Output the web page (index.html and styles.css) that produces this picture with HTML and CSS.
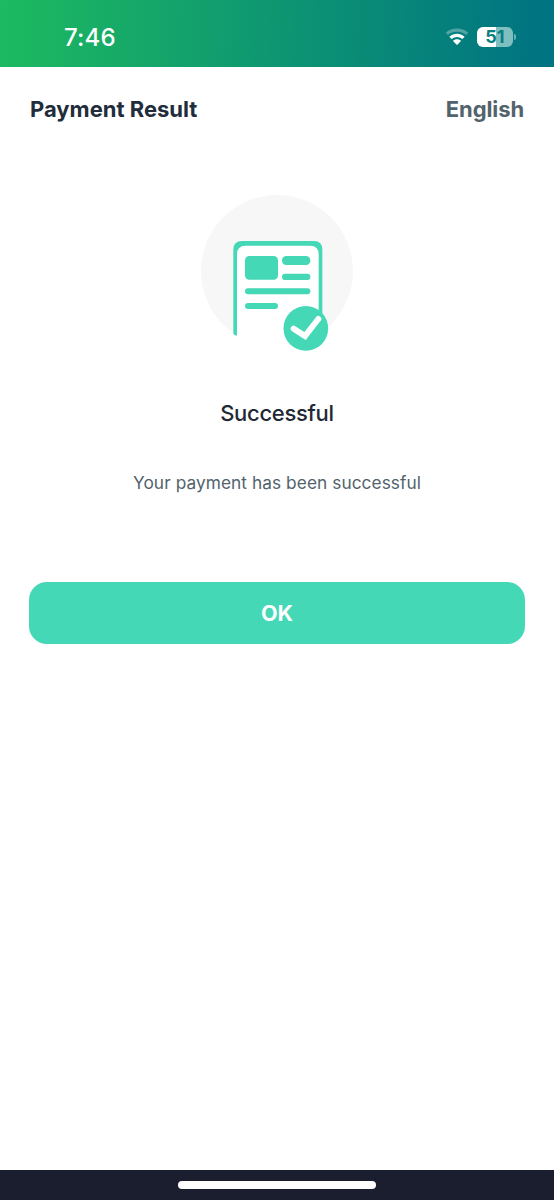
FILE: index.html
```html
<!DOCTYPE html>
<html lang="en">
<head>
<meta charset="utf-8">
<meta name="viewport" content="width=device-width, initial-scale=1">
<title>Payment Result</title>
<link rel="stylesheet" href="styles.css">
</head>
<body>
<div class="screen">
  <div class="status-bar">
    <span class="time">7:46</span>
    <div class="indicators">
      <svg class="wifi" viewBox="0 0 24 20" aria-hidden="true">
        <path class="wifi-faint" d="M0.7 5.7C7 .2 17 .2 23.3 5.7L21.1 7.900C16 3.600 8 3.600 2.9 7.900Z"/>
        <path d="M4.3 9.8C8.7 5.8 15.3 5.8 19.7 9.8L17.3 12.1C14.3 9.4 9.7 9.4 6.7 12.1Z"/>
        <path d="M7.8 13.7C10.2 11.6 13.8 11.6 16.2 13.7L12.6 17.4Q12 18 11.4 17.4Z"/>
      </svg>
      <div class="battery"><span class="level">51</span></div>
      <span class="battery-cap"></span>
    </div>
  </div>
  <header class="header">
    <h1 class="title">Payment Result</h1>
    <span class="language">English</span>
  </header>
  <main class="result">
    <svg class="illustration" viewBox="0 0 522 525" aria-hidden="true">
      <circle cx="261" cy="258" r="228" fill="#f7f7f8"/>
      <path d="M141 500V202Q141 182 161 182H367Q387 182 387 202V500Z" fill="#fff"/>
      <path d="M130 444V194Q130 168 156 168H372Q397 168 397 194V400H386V208Q386 182 360 182H167Q141 182 141 208V452Q130 450 130 444Z" fill="#44d8b6"/>
      <g fill="#44d8b6">
        <rect x="165" y="213" width="99" height="71" rx="13"/>
        <rect x="276" y="213" width="85" height="27" rx="13"/>
        <rect x="276" y="266" width="85" height="19" rx="9"/>
        <rect x="165" y="310" width="196" height="18" rx="9"/>
        <rect x="165" y="354" width="99" height="18" rx="9"/>
        <circle cx="347.500" cy="430" r="67"/>
      </g>
      <path d="M311 431L345 453L385 402" fill="none" stroke="#fff" stroke-width="18" stroke-linecap="round"/>
    </svg>
    <h2 class="status">Successful</h2>
    <p class="message">Your payment has been successful</p>
    <button class="ok" type="button">OK</button>
  </main>
  <footer class="home-bar"><span class="home-indicator"></span></footer>
</div>
</body>
</html>
```
FILE: styles.css
```css
* { box-sizing: border-box; }
body { margin: 0; background: #fff; font-family: Inter, "Liberation Sans", sans-serif; }
.screen { height: 1200px; display: flex; flex-direction: column; overflow: hidden; }
.status-bar {
  height: 67px;
  padding: 7px 38px 0 64px;
  display: flex;
  align-items: flex-start;
  justify-content: space-between;
  background: linear-gradient(92deg, #1dba60 0%, #007482 97%);
  color: #fff;
}
.time { font-size: 24px; line-height: 62px; font-weight: 500; letter-spacing: .2px; }
.indicators { height: 60px; display: flex; align-items: center; }
.wifi { width: 24px; height: 20px; margin-right: 8px; fill: #fff; }
.wifi-faint { opacity: .3; }
.battery {
  width: 36px;
  height: 20px;
  border-radius: 6px;
  background: linear-gradient(90deg, #fff 0 52%, #80bfc0 52%);
  color: #087f80;
  text-align: center;
}
.level { display: block; font-size: 18px; line-height: 20px; font-weight: 700; }
.battery-cap { width: 2px; height: 6px; margin-left: 1px; border-radius: 0 3px 3px 0; background: #69b2b6; }
.header { height: 84px; padding: 0 30px; display: flex; justify-content: space-between; line-height: 84px; }
.title { margin: 0; font-size: 22px; font-weight: 650; color: #222d3b; }
.language { font-size: 22px; font-weight: 650; letter-spacing: -.1px; color: #53636c; }
.result { flex: 1; padding: 34px 29px 0; display: flex; flex-direction: column; align-items: center; }
.illustration { width: 174px; height: 175px; flex: none; }
.status { margin: 38px 0 0; font-size: 22px; line-height: 30px; font-weight: 480; letter-spacing: -.3px; color: #1f2935; }
.message { margin: 43px 0 0; font-size: 17.3px; line-height: 24px; letter-spacing: .06px; color: #53636c; white-space: nowrap; }
.ok {
  width: 100%;
  height: 62px;
  margin-top: 87px;
  padding: 0;
  border: 0;
  border-radius: 18px;
  background: #44d8b6;
  color: #fff;
  font: 650 21.5px/62px Inter, "Liberation Sans", sans-serif;
}
.home-bar { height: 30px; padding-top: 11px; display: flex; justify-content: center; background: #1b1e2e; }
.home-indicator { width: 198px; height: 8px; border-radius: 4px; background: #fff; }
```
